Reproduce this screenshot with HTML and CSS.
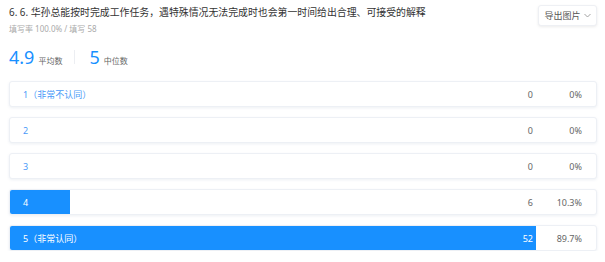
FILE: index.html
```html
<!DOCTYPE html>
<html lang="zh-CN">
    <head>
        <meta charset="UTF-8" />
        <meta name="viewport" content="width=device-width, initial-scale=1.0" />
        <title>题目统计</title>
        <link rel="stylesheet" href="styles.css">
    </head>
    <body>
        <div class="question">
            <div class="question-head">
                <div class="question-info">
                    <div class="question-title">6. 6. 华孙总能按时完成工作任务，遇特殊情况无法完成时也会第一时间给出合理、可接受的解释</div>
                    <div class="question-meta">填写率 100.0% / 填写 58</div>
                </div>
                <button class="export-btn">
                    导出图片
                    <svg width="7" height="5" viewBox="0 0 7 5"><path d="M0.5 1 L3.5 4 L6.5 1" fill="none" stroke="#999" stroke-width="0.9"/></svg>
                </button>
            </div>

            <div class="stats">
                <div class="stat">
                    <span class="stat-value">4.9</span>
                    <span class="stat-label">平均数</span>
                </div>
                <div class="stat-divider"></div>
                <div class="stat">
                    <span class="stat-value">5</span>
                    <span class="stat-label">中位数</span>
                </div>
            </div>

            <div class="options">
                <div class="option">
                    <div class="option-fill" style="width: 0%"></div>
                    <span class="option-label">1（非常不认同）</span>
                    <span class="option-count">0</span>
                    <span class="option-percent">0%</span>
                </div>
                <div class="option">
                    <div class="option-fill" style="width: 0%"></div>
                    <span class="option-label">2</span>
                    <span class="option-count">0</span>
                    <span class="option-percent">0%</span>
                </div>
                <div class="option">
                    <div class="option-fill" style="width: 0%"></div>
                    <span class="option-label">3</span>
                    <span class="option-count">0</span>
                    <span class="option-percent">0%</span>
                </div>
                <div class="option option-filled">
                    <div class="option-fill" style="width: 10.3%"></div>
                    <span class="option-label">4</span>
                    <span class="option-count">6</span>
                    <span class="option-percent">10.3%</span>
                </div>
                <div class="option option-filled option-majority">
                    <div class="option-fill" style="width: 89.7%"></div>
                    <span class="option-label">5（非常认同）</span>
                    <span class="option-count">52</span>
                    <span class="option-percent">89.7%</span>
                </div>
            </div>
        </div>
    </body>
</html>
```

FILE: styles.css
```css
body {
    font-family: "Noto Sans", "Noto Sans CJK SC", sans-serif;
    margin: 0;
    padding: 0 8px 0 9px;
    background: #fff;
    color: #333;
}
.question-head {
    display: flex;
    justify-content: space-between;
    align-items: flex-start;
    padding-top: 5px;
}
.question-title {
    font-size: 9.9px;
    line-height: 14px;
    color: #333;
}
.question-meta {
    font-size: 8px;
    line-height: 12px;
    color: #aaa;
    margin-top: 4px;
}
.export-btn {
    font-family: inherit;
    font-size: 9px;
    color: #555;
    background: #fff;
    border: 1px solid #eef0f4;
    border-radius: 3px;
    box-shadow: 0 1px 3px rgba(0, 0, 0, 0.08);
    height: 21px;
    width: 59px;
    padding: 0;
    display: flex;
    align-items: center;
    justify-content: center;
    gap: 3px;
}
.stats {
    display: flex;
    align-items: center;
    margin-top: 12px;
    height: 20px;
}
.stat {
    display: flex;
    align-items: baseline;
    gap: 4px;
}
.stat-value {
    font-size: 18px;
    line-height: 20px;
    color: #1890ff;
}
.stat-label {
    font-size: 8px;
    color: #666;
}
.stat-divider {
    width: 1px;
    height: 14px;
    background: #eceef2;
    margin: 0 14px 0 12px;
}
.options {
    display: flex;
    flex-direction: column;
    gap: 10px;
    margin-top: 14px;
    width: 588px;
}
.option {
    position: relative;
    display: flex;
    align-items: center;
    height: 26px;
    box-sizing: border-box;
    border: 1px solid #edf0f5;
    border-radius: 3px;
    box-shadow: 0 1px 3px rgba(30, 60, 120, 0.08);
    background: #fff;
    padding: 0 14px 0 13px;
    font-size: 9px;
    overflow: hidden;
}
.option-fill {
    position: absolute;
    left: 0;
    top: 0;
    bottom: 0;
    background: #1890ff;
}
.option-label {
    position: relative;
    flex: 1;
    color: #4a9af8;
}
.option-count {
    position: relative;
    width: 40px;
    text-align: right;
    color: #666;
}
.option-percent {
    position: relative;
    width: 49px;
    text-align: right;
    color: #666;
}
.option-filled .option-label {
    color: #fff;
}
.option-majority .option-count {
    color: #fff;
}
```
